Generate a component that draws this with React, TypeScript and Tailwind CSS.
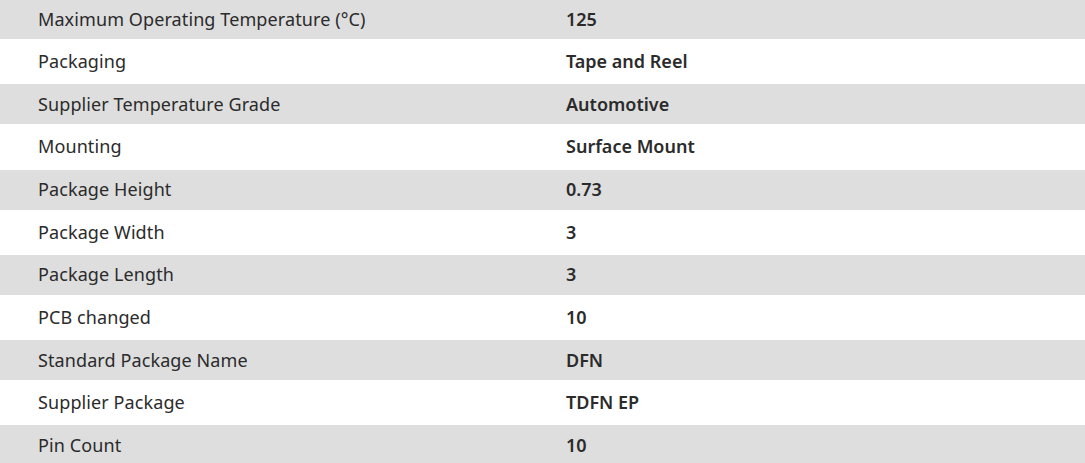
import React from "react";

const rows: [string, string][] = [
  ["Maximum Operating Temperature (°C)", "125"],
  ["Packaging", "Tape and Reel"],
  ["Supplier Temperature Grade", "Automotive"],
  ["Mounting", "Surface Mount"],
  ["Package Height", "0.73"],
  ["Package Width", "3"],
  ["Package Length", "3"],
  ["PCB changed", "10"],
  ["Standard Package Name", "DFN"],
  ["Supplier Package", "TDFN EP"],
  ["Pin Count", "10"],
];

export default function App() {
  return (
    <div
      className="w-[1085px] h-[463px] overflow-hidden bg-white text-[#2b2b2b]"
      style={{ fontFamily: '"Noto Sans", sans-serif' }}
    >
      <div className="-mt-px flex flex-col">
        {rows.map(([k, v], i) => (
          <div
            key={k}
            className={
              i % 2 === 0
                ? "flex items-center h-[40px] bg-[#dedede] text-[18px]"
                : "flex items-center h-[45.25px] bg-white text-[18px]"
            }
          >
            <div className="w-[566px] pl-[38px] tracking-[0.1px]">{k}</div>
            <div className="font-semibold">{v}</div>
          </div>
        ))}
      </div>
    </div>
  );
}
